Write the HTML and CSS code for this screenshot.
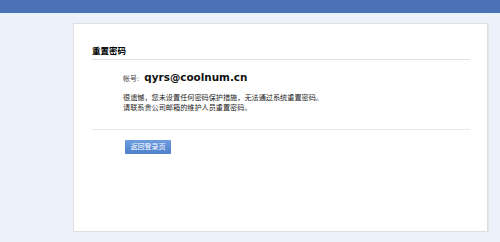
FILE: index.html
```html
<!DOCTYPE html>
<html lang="zh-CN">
<head>
<meta charset="utf-8">
<title>重置密码</title>
<link rel="stylesheet" href="styles.css">
</head>
<body>
<div class="topbar"></div>
<div class="main">
  <div class="card">
    <h2 class="title">重置密码</h2>
    <div class="content">
      <div class="account"><span class="label">帐号:</span><span class="email">qyrs@coolnum.cn</span></div>
      <p class="msg">很遗憾，您未设置任何密码保护措施，无法通过系统重置密码。<br>请联系贵公司邮箱的维护人员重置密码。</p>
    </div>
    <div class="actions">
      <a class="btn" href="#">返回登录页</a>
    </div>
  </div>
</div>
</body>
</html>
```
FILE: styles.css
```css
html, body {
  margin: 0;
  padding: 0;
  background: #ebf2f9;
  font-family: "DejaVu Sans", "Noto Sans CJK SC", sans-serif;
  color: #222;
}
.topbar {
  height: 13px;
  background: #4a72b4;
}
.main {
  padding: 10px 0 0 73px;
}
.card {
  box-sizing: border-box;
  width: 415px;
  height: 209px;
  background: #fff;
  border: 1px solid #dedede;
  box-shadow: 1px 1px 0 #e4e4e4;
  padding: 0 17px 0 18px;
}
.title {
  margin: 0;
  padding: 22px 0 3px 0;
  font-size: 8.5px;
  line-height: 10px;
  font-weight: bold;
  color: #000;
  border-bottom: 1px solid #e4e4e4;
}
.content {
  padding: 11px 0 16px 31px;
  border-bottom: 1px solid #e8e8e8;
}
.account {
  display: flex;
  align-items: baseline;
  height: 14px;
}
.label {
  font-size: 7px;
  color: #444;
  margin-right: 5px;
}
.email {
  font-size: 10.4px;
  font-weight: bold;
  color: #111;
}
.msg {
  margin: 8px 0 0 0;
  font-size: 7.15px;
  line-height: 10px;
  color: #222;
}
.actions {
  display: flex;
  padding: 10px 0 0 33px;
}
.btn {
  display: block;
  width: 46px;
  height: 14px;
  line-height: 14px;
  text-align: center;
  font-size: 7px;
  color: #fff;
  text-decoration: none;
  background: linear-gradient(#6e9ce0, #4d80cc);
  border-radius: 1px;
}
```
